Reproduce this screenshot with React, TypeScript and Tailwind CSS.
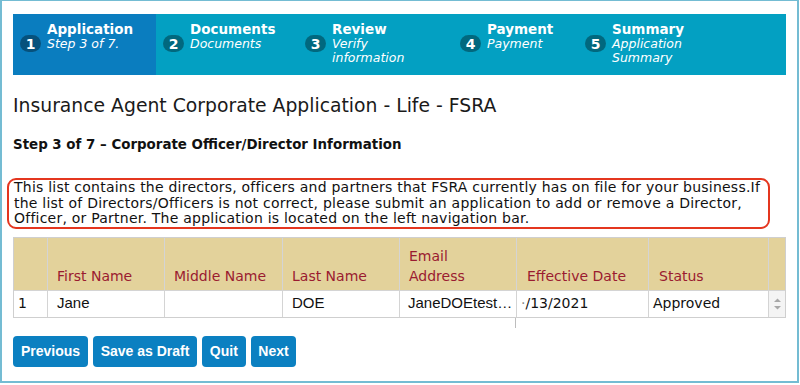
const steps = [
  { n: 1, title: 'Application', sub: ['Step 3 of 7.'], w: 'w-[143px]', active: true },
  { n: 2, title: 'Documents', sub: ['Documents'], w: 'w-[142px]', active: false },
  { n: 3, title: 'Review', sub: ['Verify', 'information'], w: 'w-[155px]', active: false },
  { n: 4, title: 'Payment', sub: ['Payment'], w: 'w-[125px]', active: false },
  { n: 5, title: 'Summary', sub: ['Application', 'Summary'], w: 'flex-1', active: false },
]

const verdana = "font-['DejaVu_Sans','Verdana',sans-serif]"
const arial = "font-['Liberation_Sans','Arial',sans-serif]"

function StepBar() {
  return (
    <div className="flex h-[61px] bg-[#03a0c2] text-white">
      {steps.map(s => (
        <div
          key={s.n}
          className={`${s.w} flex pl-[7px] pt-[8px] ${s.active ? 'bg-[#0a7dbf]' : ''}`}
        >
          <div className="mt-[13px] flex h-[17px] w-[21px] shrink-0 items-center justify-center rounded-full bg-black/35 text-[14px] font-bold leading-none">
            {s.n}
          </div>
          <div className="ml-[6px]">
            <div className="text-[13.5px] font-bold leading-[15px]">{s.title}</div>
            {s.sub.map(line => (
              <div key={line} className="text-[12.5px] italic leading-[14px]">
                {line}
              </div>
            ))}
          </div>
        </div>
      ))}
    </div>
  )
}

const cols = [
  { label: '', w: 'w-[34px]' },
  { label: 'First Name', w: 'w-[117px]' },
  { label: 'Middle Name', w: 'w-[118px]' },
  { label: 'Last Name', w: 'w-[117px]' },
  { label: 'Email Address', w: 'w-[117px]' },
  { label: 'Effective Date', w: 'w-[132px]' },
  { label: 'Status', w: 'w-[120px]' },
  { label: '', w: 'flex-1' },
]

function OfficerTable() {
  return (
    <div className="relative">
      <div className="border border-[#cfcfcf] text-[14px]">
        <div className="flex h-[52px] bg-[#e3d29b] text-[#9a1b30]">
          {cols.map((c, i) => (
            <div
              key={i}
              className={`${c.w} flex items-end border-r border-[#d4d4d4] pb-[4px] ${i >= 5 ? 'pl-[10px]' : 'pl-[9px]'} leading-[20px] last:border-r-0`}
            >
              {c.label === 'Email Address' ? (
                <span>
                  Email
                  <br />
                  Address
                </span>
              ) : (
                c.label
              )}
            </div>
          ))}
        </div>
        <div className="flex h-[27px] items-center border-t border-[#d4d4d4] bg-white text-[#111]">
          <div className="flex h-full w-[34px] items-center border-r border-[#d4d4d4] pl-[4px]">1</div>
          <div className={`flex h-full w-[117px] items-center border-r border-[#d4d4d4] pl-[9px] ${arial} text-[15px]`}>Jane</div>
          <div className="h-full w-[118px] border-r border-[#d4d4d4]" />
          <div className={`flex h-full w-[117px] items-center border-r border-[#d4d4d4] pl-[9px] ${arial} text-[15px]`}>DOE</div>
          <div className={`flex h-full w-[117px] items-center overflow-hidden whitespace-nowrap border-r border-[#d4d4d4] pl-[8px] ${arial} text-[15px]`}>
            JaneDOEtest…
          </div>
          <div className="flex h-full w-[132px] items-center border-r border-[#d4d4d4] pl-[4px]">
            <span className="text-[#888]">·</span>/13/2021
          </div>
          <div className="flex h-full w-[120px] items-center border-r border-[#d4d4d4] pl-[4px]">Approved</div>
          <div className="flex h-full flex-1 flex-col items-center justify-center bg-[#f4f4f4]">
            <svg width="9" height="14" viewBox="0 0 9 14">
              <path d="M1 5 L4.5 1.5 L8 5 Z" fill="#a8a8a8" />
              <path d="M1 9 L4.5 12.5 L8 9 Z" fill="#a8a8a8" />
            </svg>
          </div>
        </div>
      </div>
      <div className="absolute left-[502px] top-[81px] h-[10px] w-px bg-[#bdbdbd]" />
    </div>
  )
}

export default function App() {
  return (
    <div className={`h-[385px] w-[800px] bg-white ${verdana} text-[#111]`}>
      <div className="h-[383px] w-[799px] border-2 border-t border-[#74bcd3] px-[11px] pt-[13px]">
        <StepBar />

        <h1 className="mt-[20px] whitespace-nowrap text-[18.8px] leading-[22px] text-[#1a1a1a]">
          Insurance Agent Corporate Application - Life - FSRA
        </h1>
        <h2 className="mt-[20px] whitespace-nowrap text-[13.4px] font-bold leading-[16px]">
          Step 3 of 7 – Corporate Officer/Director Information
        </h2>

        <div className="-ml-[6px] mt-[25px] w-[763px] whitespace-nowrap rounded-[9px] border-2 border-[#e4361f] px-[5px] py-0 text-[14px] leading-[15.5px] tracking-[0.23px]">
          This list contains the directors, officers and partners that FSRA currently has on file for your business.If
          <br />
          the list of Directors/Officers is not correct, please submit an application to add or remove a Director,
          <br />
          Officer, or Partner. The application is located on the left navigation bar.
        </div>

        <div className="mt-[8px]">
          <OfficerTable />
        </div>

        <div className={`mt-[18px] flex gap-[5px] ${arial} text-[14px] font-bold text-white`}>
          <button className="h-[31px] rounded-[4px] bg-[#0b80c1] px-[8px]">Previous</button>
          <button className="h-[31px] rounded-[4px] bg-[#0b80c1] px-[7.5px]">Save as Draft</button>
          <button className="h-[31px] rounded-[4px] bg-[#0b80c1] px-[8px]">Quit</button>
          <button className="h-[31px] rounded-[4px] bg-[#0b80c1] px-[7.5px]">Next</button>
        </div>
      </div>
    </div>
  )
}
